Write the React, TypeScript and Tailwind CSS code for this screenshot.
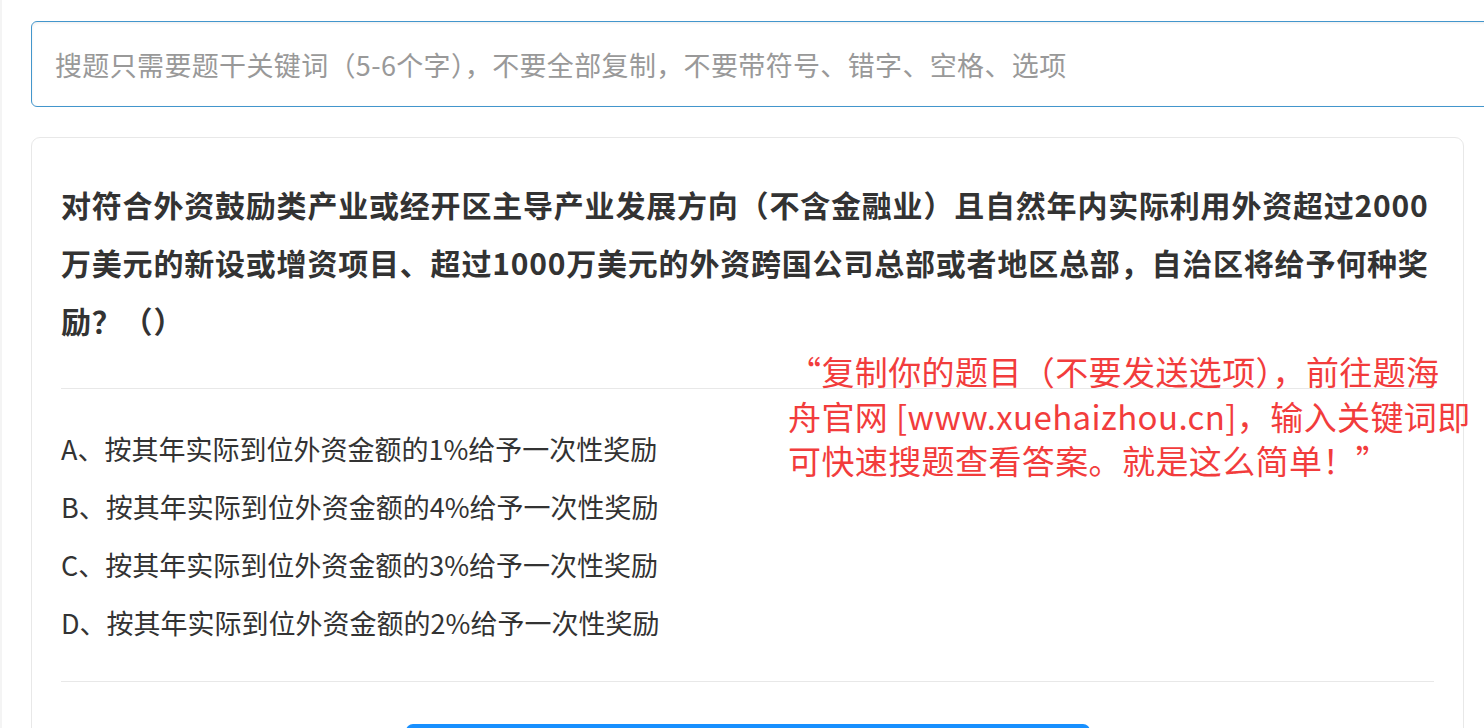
const font = { fontFamily: '"Noto Sans CJK SC", "Noto Sans", sans-serif' };

const options = [
  'A、按其年实际到位外资金额的1%给予一次性奖励',
  'B、按其年实际到位外资金额的4%给予一次性奖励',
  'C、按其年实际到位外资金额的3%给予一次性奖励',
  'D、按其年实际到位外资金额的2%给予一次性奖励',
];

export default function App() {
  return (
    <div
      className="relative h-[728px] w-full overflow-hidden border-l-2 border-[#f4f4f4] bg-white"
      style={font}
    >
      <div className="pl-[29px] pt-[21px]">
        <input
          type="text"
          placeholder="搜题只需要题干关键词（5-6个字），不要全部复制，不要带符号、错字、空格、选项"
          className="block h-[86px] w-[1500px] rounded-[6px] border border-[#4396cc] bg-white pl-[23px] text-[27px] tracking-[0.35px] text-[#333] shadow-[inset_0_1px_3px_rgba(0,0,0,0.08)] outline-none placeholder:text-[#999]"
        />

        <div className="mt-[30px] w-[1433px] rounded-[9px] border border-[#e8e8e8] bg-white px-[29px] pt-[37px]">
          <h1 className="text-[30px] font-bold leading-[58px] tracking-[0.8px] text-[#333]">
            对符合外资鼓励类产业或经开区主导产业发展方向（不含金融业）且自然年内实际利用外资超过2000万美元的新设或增资项目、超过1000万美元的外资跨国公司总部或者地区总部，自治区将给予何种奖励？（）
          </h1>

          <div className="mt-[39px] border-t border-[#e8e8e8] pb-[29px] pt-[31px]">
            {options.map((o) => (
              <div key={o} className="text-[27px] leading-[58px] text-[#333]">
                {o}
              </div>
            ))}
          </div>

          <div className="border-t border-[#e8e8e8] pt-[42px]">
            <button className="mx-auto block h-[48px] w-[684px] rounded-[7px] bg-[#1890ff]" />
          </div>
        </div>
      </div>

      <div className="absolute left-[786px] top-[349px] whitespace-nowrap text-[33px] leading-[44.5px] tracking-[0.4px] text-[#f23c3c]">
        <div>“复制你的题目（不要发送选项），前往题海</div>
        <div>舟官网 [www.xuehaizhou.cn]，输入关键词即</div>
        <div>可快速搜题查看答案。就是这么简单！”</div>
      </div>
    </div>
  );
}
